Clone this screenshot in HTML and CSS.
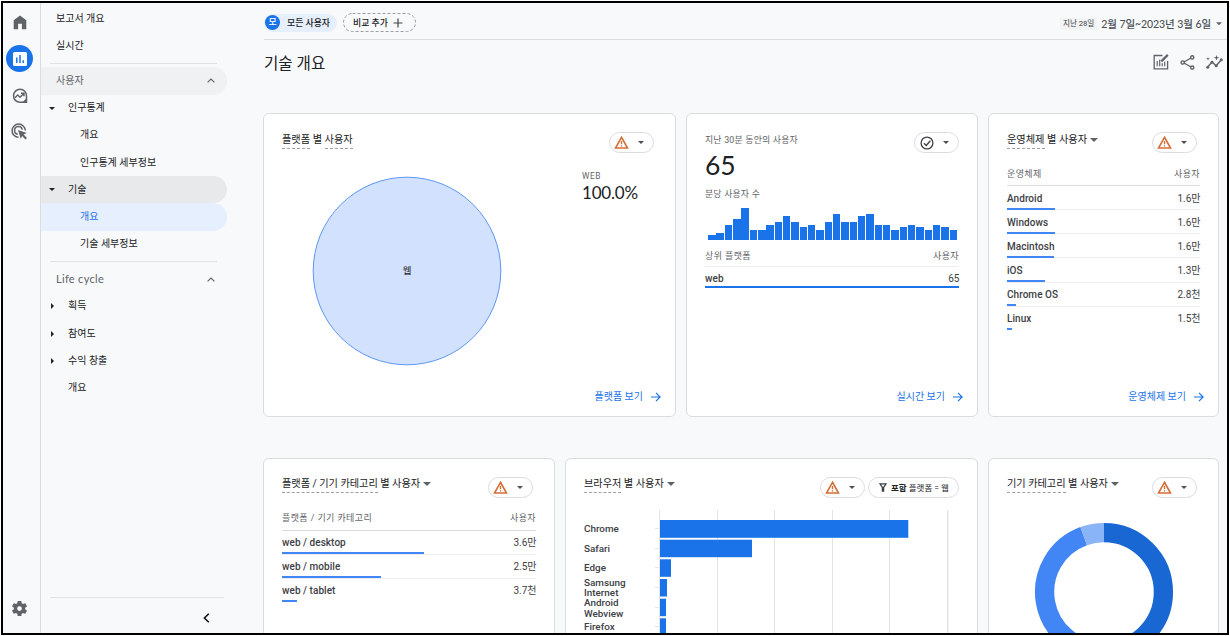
FILE: index.html
```html
<!DOCTYPE html>
<html lang="ko">
<head>
<meta charset="utf-8">
<title>기술 개요</title>
<link rel="stylesheet" href="styles.css">
</head>
<body>
<svg class="defs" width="0" height="0" aria-hidden="true">
  <symbol id="warn" viewBox="0 0 24 24"><path d="M12 3.600 21.600 20.800H2.400Z" fill="none" stroke="#d56e36" stroke-width="2.500"/><path d="M12 9.500v5.200M12 16.300v2.200" stroke="#d56e36" stroke-width="2.200"/></symbol>
  <symbol id="caret" viewBox="0 0 8 4"><path d="M0 0h8L4 4z" fill="currentColor"/></symbol>
  <symbol id="arrow" viewBox="0 0 10 10"><path d="M0 5h9M5 .9 9.100 5 5 9.100" fill="none" stroke="#1a73e8" stroke-width="1.200"/></symbol>
  <symbol id="up" viewBox="0 0 8 5"><path d="M.6 4.400 4 1l3.400 3.400" fill="none" stroke="#5f6368" stroke-width="1.100"/></symbol>
</svg>
<div class="frame">
  <aside class="rail">
    <div class="rail-item home"><svg width="14" height="15" viewBox="0 0 14 15"><path d="M.7 5.200 7 .5l6.300 4.700V14.200H8.900V8.800H5.100v5.400H.7Z" fill="#5f6368"/></svg></div>
    <div class="rail-item active"><svg width="14" height="14" viewBox="0 0 14 14"><rect width="14" height="14" rx="1.500" fill="#fff"/><path d="M3.800 5.500v5.500M7 3v8M10.200 8.200V11" stroke="#1a73e8" stroke-width="1.500"/></svg></div>
    <div class="rail-item explore"><svg width="16" height="16" viewBox="0 0 16 16"><path d="M14.500 8.300V14.300H8A6.500 6.500 0 1 1 14.500 8Z" fill="none" stroke="#5f6368" stroke-width="1.500"/><path d="m3 9.800 2.700-2.700 2.300 2.200 3.600-3.600M9 5.200h3v3" fill="none" stroke="#5f6368" stroke-width="1.400"/><path d="M14.800 10v4.600H10z" fill="#5f6368"/></svg></div>
    <div class="rail-item ads"><svg width="17" height="17" viewBox="0 0 17 17"><path d="M7.500 14.300A6.600 6.600 0 1 1 14.300 7.500M6.800 11.300A3.900 3.900 0 1 1 11.300 6.600" fill="none" stroke="#5f6368" stroke-width="1.500"/><path d="m7 7 8.800 3-3.200 1.600 3.400 3.400-1.500 1.500-3.400-3.400L9.800 16z" fill="#5f6368"/></svg></div>
    <div class="rail-item gear"><svg width="19" height="19" viewBox="0 0 24 24"><path d="M19.140 12.940c.04-.3.060-.61.060-.94s-.02-.64-.07-.94l2.030-1.580a.49.49 0 0 0 .12-.61l-1.920-3.320a.49.49 0 0 0-.59-.22l-2.390.96a7 7 0 0 0-1.620-.94l-.36-2.540A.48.48 0 0 0 13.920 2.400h-3.840a.48.48 0 0 0-.47.410l-.36 2.540c-.59.240-1.130.570-1.620.940l-2.390-.96a.48.48 0 0 0-.59.220L2.740 8.870a.47.47 0 0 0 .12.610l2.030 1.580c-.05.300-.09.630-.09.940s.02.640.07.940l-2.030 1.580a.49.49 0 0 0-.12.610l1.920 3.320c.12.220.37.290.59.220l2.390-.96c.5.380 1.030.700 1.620.940l.36 2.540c.05.240.24.410.48.410h3.840c.24 0 .44-.17.470-.41l.36-2.540c.59-.24 1.130-.56 1.620-.94l2.390.960c.22.080.47 0 .59-.22l1.920-3.320a.47.47 0 0 0-.12-.61zM12 15a3 3 0 1 1 0-6 3 3 0 0 1 0 6z" fill="#5f6368"/></svg></div>
  </aside>

  <nav class="nav">
    <div class="nav-row top">보고서 개요</div>
    <div class="nav-row top">실시간</div>
    <div class="rule"></div>
    <div class="nav-row head shade">사용자<svg class="chev" width="8" height="5"><use href="#up"/></svg></div>
    <div class="nav-row l1"><svg class="tri" width="6" height="3"><path d="M0 0h6L3 3z"/></svg>인구통계</div>
    <div class="nav-row l2">개요</div>
    <div class="nav-row l2">인구통계 세부정보</div>
    <div class="nav-row l1 open"><svg class="tri" width="6" height="3"><path d="M0 0h6L3 3z"/></svg>기술</div>
    <div class="nav-row l2 selected">개요</div>
    <div class="nav-row l2">기술 세부정보</div>
    <div class="rule second"></div>
    <div class="nav-row head"><span class="life">Life cycle</span><svg class="chev" width="8" height="5"><use href="#up"/></svg></div>
    <div class="nav-row l1"><svg class="tri" width="6" height="6"><path d="M2 0v6l3-3z"/></svg>획득</div>
    <div class="nav-row l1"><svg class="tri" width="6" height="6"><path d="M2 0v6l3-3z"/></svg>참여도</div>
    <div class="nav-row l1"><svg class="tri" width="6" height="6"><path d="M2 0v6l3-3z"/></svg>수익 창출</div>
    <div class="nav-row l1"><span class="tri"></span>개요</div>
    <div class="nav-foot"><svg width="7" height="10" viewBox="0 0 7 10"><path d="M5.800.7 1.400 5l4.400 4.300" fill="none" stroke="#111" stroke-width="1.600"/></svg></div>
  </nav>

  <main class="main">
    <header class="bar">
      <div class="chip all"><b>모</b>모든 사용자</div>
      <div class="chip add"><svg class="outline" width="73" height="19"><rect x=".5" y=".5" width="72" height="18" rx="9"/></svg>비교 추가<svg width="10" height="10"><path d="M5 .5v9M.5 5h9" stroke="#444" stroke-width="1.200"/></svg></div>
      <div class="date"><small>지난 28일</small><span>2월 7일~2023년 3월 6일</span><svg width="6" height="3.500"><use href="#caret"/></svg></div>
    </header>
    <div class="title">
      <h1>기술 개요</h1>
      <div class="tools">
        <svg width="16" height="16" viewBox="0 0 16 16" fill="none" stroke="#5f6368" stroke-width="1.300"><path d="M9.500 1.500H1.200v13.300h13.400V7"/><path d="M4.200 7v5.300M6.700 5.500v6.800M9.200 9.200v3.100M11.700 7.800v4.500" stroke-width="1.200"/><path d="m8.300 7.400 6.500-6.500" stroke-width="2.200"/></svg>
        <svg width="15" height="15" viewBox="0 0 15 15" fill="none" stroke="#5f6368" stroke-width="1.400"><path d="M3 7.500 12 2.500M3 7.500l9 5"/><circle cx="2.700" cy="7.500" r="1.600" fill="#f8f9fb"/><circle cx="12.200" cy="2.400" r="1.600" fill="#f8f9fb"/><circle cx="12.200" cy="12.600" r="1.600" fill="#f8f9fb"/></svg>
        <svg width="17" height="15" viewBox="0 0 17 15" fill="#5f6368"><path d="m1.500 12.300 4.500-5.300 4.100 3.700L15.600 4.500" fill="none" stroke="#5f6368" stroke-width="1.500"/><circle cx="1.700" cy="12.200" r="1.500"/><circle cx="6" cy="7.200" r="1.400"/><circle cx="10.200" cy="10.800" r="1.500"/><circle cx="15.300" cy="4.800" r="1.500"/><path d="m10.500 0 .7 2.100 2.100.7-2.100.7-.7 2.100-.7-2.100-2.100-.7 2.100-.7zM2 2l.5 1.300 1.300.5-1.300.5L2 5.600l-.5-1.300-1.300-.5 1.300-.5z"/></svg>
      </div>
    </div>

    <div class="cards row1">
      <section class="card">
        <div class="card-head"><h2><u>플랫폼</u> 별 <u>사용자</u></h2><div class="pill"><svg width="15" height="15"><use href="#warn"/></svg><svg class="pc" width="6" height="3"><use href="#caret"/></svg></div></div>
        <div class="pie-area">
          <svg class="pie" width="190" height="190"><circle cx="95" cy="95" r="93.800" fill="#d2e1fd" stroke="#5e97f6"/><text x="95" y="98" text-anchor="middle">웹</text></svg>
          <div class="pie-legend"><div class="cap">WEB</div><div class="pct">100.0%</div></div>
        </div>
        <div class="link">플랫폼 보기<svg width="10" height="10"><use href="#arrow"/></svg></div>
      </section>

      <section class="card live">
        <div class="card-head"><div class="sub">지난 30분 동안의 사용자</div><div class="pill"><svg width="14" height="14" viewBox="0 0 14 14" fill="none" stroke="#3c4043"><circle cx="7" cy="7" r="5.900" stroke-width="1.300"/><path d="m4 7.200 2.200 2.200 4.200-4.600" stroke-width="1.400"/></svg><svg class="pc" width="6" height="3"><use href="#caret"/></svg></div></div>
        <div class="big">65</div>
        <div class="sub per">분당 사용자 수</div>
        <div class="bars">
          <i style="height:5px"></i><i style="height:7.500px"></i><i style="height:15.500px"></i><i style="height:21px"></i><i style="height:32px"></i><i style="height:10.500px"></i><i style="height:10.500px"></i><i style="height:15.500px"></i><i style="height:18.500px"></i><i style="height:24px"></i><i style="height:18.500px"></i><i style="height:13px"></i><i style="height:15.500px"></i><i style="height:10.500px"></i><i style="height:18.500px"></i><i style="height:26.500px"></i><i style="height:18.500px"></i><i style="height:18.500px"></i><i style="height:24px"></i><i style="height:26.500px"></i><i style="height:15.500px"></i><i style="height:15.500px"></i><i style="height:10.500px"></i><i style="height:13px"></i><i style="height:15.500px"></i><i style="height:13px"></i><i style="height:10.500px"></i><i style="height:15.500px"></i><i style="height:13px"></i><i style="height:10.500px"></i>
        </div>
        <div class="tbl">
          <div class="th"><span>상위 플랫폼</span><span>사용자</span></div>
          <div class="tr"><b>web</b><span>65</span><i style="width:100%"></i></div>
        </div>
        <div class="link">실시간 보기<svg width="10" height="10"><use href="#arrow"/></svg></div>
      </section>

      <section class="card">
        <div class="card-head"><h2><u>운영체제</u> 별 사용자<svg class="hc" width="8" height="4"><use href="#caret"/></svg></h2><div class="pill"><svg width="15" height="15"><use href="#warn"/></svg><svg class="pc" width="6" height="3"><use href="#caret"/></svg></div></div>
        <div class="tbl">
          <div class="th"><span>운영체제</span><span>사용자</span></div>
          <div class="tr"><b>Android</b><span>1.6만</span><i style="width:48px"></i></div>
          <div class="tr"><b>Windows</b><span>1.6만</span><i style="width:47.500px"></i></div>
          <div class="tr"><b>Macintosh</b><span>1.6만</span><i style="width:47px"></i></div>
          <div class="tr"><b>iOS</b><span>1.3만</span><i style="width:37.500px"></i></div>
          <div class="tr"><b>Chrome OS</b><span>2.8천</span><i style="width:8.500px"></i></div>
          <div class="tr last"><b>Linux</b><span>1.5천</span><i style="width:5px"></i></div>
        </div>
        <div class="link">운영체제 보기<svg width="10" height="10"><use href="#arrow"/></svg></div>
      </section>
    </div>

    <div class="cards row2">
      <section class="card">
        <div class="card-head"><h2><u>플랫폼 / 기기 카테고리</u> 별 사용자<svg class="hc" width="8" height="4"><use href="#caret"/></svg></h2><div class="pill"><svg width="15" height="15"><use href="#warn"/></svg><svg class="pc" width="6" height="3"><use href="#caret"/></svg></div></div>
        <div class="tbl">
          <div class="th"><span>플랫폼 / 기기 카테고리</span><span>사용자</span></div>
          <div class="tr"><b>web / desktop</b><span>3.6만</span><i style="width:142px"></i></div>
          <div class="tr"><b>web / mobile</b><span>2.5만</span><i style="width:98.500px"></i></div>
          <div class="tr last"><b>web / tablet</b><span>3.7천</span><i style="width:15px"></i></div>
        </div>
      </section>

      <section class="card browser">
        <div class="card-head"><h2><u>브라우저</u> 별 사용자<svg class="hc" width="8" height="4"><use href="#caret"/></svg></h2><div class="pills"><div class="pill"><svg width="15" height="15"><use href="#warn"/></svg><svg class="pc" width="6" height="3"><use href="#caret"/></svg></div><div class="pill filter"><svg width="8" height="9" viewBox="0 0 8 9"><path d="M1 .8h6L4.600 4.400v3.600H3.400V4.400z" fill="none" stroke="#3c4043" stroke-width="1.300"/></svg><span><b>포함</b> 플랫폼 = 웹</span></div></div></div>
        <svg class="chart" width="374" height="130">
          <g fill="#e3e4e6"><rect x="75" y="0" width="1" height="130"/><rect x="133" y="0" width="1" height="130"/><rect x="190" y="0" width="1" height="130"/><rect x="248" y="0" width="1" height="130"/><rect x="305" y="0" width="1" height="130"/><rect x="363" y="0" width="1.500" height="130"/>
          <path d="M71 18h5v1h-5zM71 38h5v1h-5zM71 57h5v1h-5zM71 77h5v1h-5zM71 97h5v1h-5zM71 116h5v1h-5z"/></g>
          <g fill="#1a73e8"><rect x="76" y="10" width="248.300" height="17.800"/><rect x="76" y="29.700" width="92" height="17.500"/><rect x="76" y="49.300" width="11" height="17.500"/><rect x="76" y="69" width="7" height="17.500"/><rect x="76" y="88.700" width="6" height="17.500"/><rect x="76" y="108.300" width="6" height="17.500"/></g>
          <g class="lab"><text x="0" y="22">Chrome</text><text x="0" y="41.500">Safari</text><text x="0" y="61">Edge</text><text x="0" y="75.500">Samsung</text><text x="0" y="86.300">Internet</text><text x="0" y="95.500">Android</text><text x="0" y="106.500">Webview</text><text x="0" y="120.300">Firefox</text></g>
        </svg>
      </section>

      <section class="card">
        <div class="card-head"><h2><u>기기 카테고리</u> 별 사용자<svg class="hc" width="8" height="4"><use href="#caret"/></svg></h2><div class="pill"><svg width="15" height="15"><use href="#warn"/></svg><svg class="pc" width="6" height="3"><use href="#caret"/></svg></div></div>
        <svg class="donut" width="140" height="140" viewBox="-70 -70 140 140" fill="none" stroke-width="19.300"><path d="M0-59.400A59.400 59.400 0 0 1 0 59.400" stroke="#1967d2"/><path d="M0 59.400A59.400 59.400 0 0 1-20.300-55.820" stroke="#4285f4"/><path d="M-20.300-55.820A59.400 59.400 0 0 1 0-59.400" stroke="#8ab4f8"/></svg>
      </section>
    </div>
  </main>
</div>
</body>
</html>
```
FILE: styles.css
```css
* { box-sizing: border-box; }
body { margin: 0; width: 1230px; height: 636px; overflow: hidden; background: #fff; color: #202124; font: 10px/14px Roboto, "Noto Sans CJK KR", sans-serif; }
svg { display: block; flex: none; }
.defs { position: absolute; }
.frame { margin: 1px; width: 1228px; height: 634px; border: 2px solid #000; background: #f8f9fb; display: flex; overflow: hidden; }

.rail { width: 38px; flex: none; border-right: 1px solid #dadce0; display: flex; flex-direction: column; align-items: center; padding: 6px 4px 11px 0; }
.rail-item { width: 27px; height: 27px; display: flex; align-items: center; justify-content: center; flex: none; }
.rail-item.active { margin-top: 9px; background: #1a73e8; border-radius: 50%; }
.rail-item.explore { margin-top: 10px; }
.rail-item.ads { margin-top: 9px; }
.rail-item.gear { margin-top: auto; }

.nav { width: 222px; flex: none; display: flex; flex-direction: column; padding-top: 1.500px; }
.nav-row { width: 185.500px; height: 27.200px; flex: none; display: flex; align-items: center; border-radius: 0 14px 14px 0; color: #202124; }
.top { padding: 1px 0 0 15px; }
.head { padding: 0 11.500px 0 15px; justify-content: space-between; color: #5f6368; }
.shade { background: #f0f1f2; }
.life { font: 11px/14px Lato, sans-serif; letter-spacing: .3px; }
.l1 { padding-left: 8px; }
.tri { width: 6px; margin-right: 13px; fill: #202124; }
.l2 { padding-left: 39px; }
.open { background: #e8e9ea; }
.selected { background: #e6effd; color: #1a73e8; }
.rule { height: 1px; flex: none; background: #dfe1e4; width: 167px; margin: 4px 0 3.500px 9px; }
.rule.second { margin-top: 3px; margin-bottom: 4px; }
.nav-foot { margin: auto 0 0 9px; width: 174px; height: 36px; border-top: 1px solid #dfe1e4; display: flex; justify-content: flex-end; align-items: center; padding: 5px 14px 0 0; }

.main { flex: 1; min-width: 0; }
.bar { height: 37px; margin-left: 1px; border-bottom: 1px solid #dadce0; display: flex; align-items: center; padding: 2px 5px 0 0; }
.chip { height: 18px; display: flex; align-items: center; font-size: 8.900px; font-weight: 500; white-space: nowrap; }
.all { width: 73px; background: #e6effd; border-radius: 9px; gap: 7px; padding-left: 1px; margin-top: 1px; }
.all b { width: 15px; height: 15px; border-radius: 50%; background: #1a73e8; color: #fff; font-weight: 500; line-height: 15px; text-align: center; flex: none; }
.add { position: relative; width: 73px; margin-left: 6px; padding-left: 10px; gap: 5px; height: 19px; margin-top: 1px; }
.outline { position: absolute; left: 0; top: 0; fill: none; stroke: #9aa0a6; stroke-dasharray: 3 2; }
.date { margin-left: auto; display: flex; align-items: center; color: #5f6368; white-space: nowrap; padding-top: 4px; }
.date small { background: #f1f3f4; font-size: 7.600px; line-height: 12px; padding: 0 3px; margin-right: 4px; color: #3c4043; }
.date span { font: 500 10.500px/14px Lato, "Noto Sans CJK KR", sans-serif; letter-spacing: -.08px; margin-right: 5px; color: #4b4f54; }
.title { height: 73px; display: flex; justify-content: space-between; padding: 12px 4px 0 1px; }
h1 { margin: 0; font-size: 15.600px; line-height: 25px; font-weight: 400; }
.tools { display: flex; align-items: center; gap: 11px; height: 20px; }

.cards { display: grid; gap: 10px; }
.row1 { grid-template-columns: 413px 292px 231px; height: 304px; }
.row2 { grid-template-columns: 292px 413px 231px; margin-top: 41px; height: 304px; }
.card { background: #fff; border: 1px solid #dadce0; border-radius: 6px; padding: 18px; display: flex; flex-direction: column; min-width: 0; }
.card-head { display: flex; justify-content: space-between; align-items: flex-start; height: 30px; flex: none; }
h2 { margin: -1px 0 0; font-size: 10.200px; line-height: 14px; font-weight: 400; display: flex; align-items: center; white-space: pre; color: #202124; }
.row2 h2 { margin-top: -2px; letter-spacing: -.03px; }
u { text-decoration: none; border-bottom: 1px dashed #9aa0a6; line-height: 16px; margin-top: 1px; }
.hc { margin-left: 3px; color: #5f6368; }
.pill { width: 45px; height: 21px; border: 1px solid #dadce0; border-radius: 11px; display: flex; align-items: center; padding-left: 4px; background: #fff; margin-right: 3px; color: #4b4f54; }
.pc { margin-left: 9px; }
.pills { display: flex; gap: 3px; }
.pills .pill { margin-right: 0; }
.pills .filter { width: 91px; padding-left: 10px; gap: 4px; font-size: 8.500px; white-space: nowrap; color: #202124; }

.pie-area { display: flex; justify-content: space-between; padding-left: 30px; height: 204px; }
.pie { margin-top: 14px; }
.pie text { font-size: 9.500px; fill: #202124; }
.pie-legend { width: 75px; padding-top: 7px; }
.cap { font-size: 8.300px; letter-spacing: .6px; color: #5f6368; line-height: 14px; }
.pct { font: 17px/20px Lato, sans-serif; letter-spacing: -.2px; }
.link { margin: auto -4px -7px 0; display: flex; justify-content: flex-end; align-items: center; gap: 8px; color: #1a73e8; height: 16px; }

.sub { font-size: 8.900px; letter-spacing: .2px; color: #5f6368; line-height: 16px; }
.live .card-head { height: 22px; }
.live .pill { margin-right: 0; padding-left: 5px; }
.big { font: 26.500px/22px Lato, sans-serif; }
.per { margin-top: 11px; line-height: 14px; }
.bars { display: flex; align-items: flex-end; height: 39px; width: 250px; margin: 0 0 0 3px; flex: none; }
.bars i { flex: 1; background: #1a73e8; margin-right: .8px; }
.tbl { display: flex; flex-direction: column; }
.th { height: 24px; display: flex; justify-content: space-between; align-items: center; border-bottom: 1px solid #dadce0; font-size: 9px; letter-spacing: .4px; color: #5f6368; }
.row2 .th { height: 23.500px; }
.tr { height: 24.150px; display: flex; justify-content: space-between; align-items: center; padding-top: 2px; border-bottom: 1px solid #eceef0; color: #3c4043; position: relative; }
.row2 .tr { padding-top: 1px; }
.tr.last { border-color: transparent; }
.tr b { font-weight: 500; letter-spacing: .05px; color: #3c4043; }
.tr > span { margin-right: -.5px; }
.tr i { position: absolute; left: 0; bottom: -.5px; height: 2px; background: #4285f4; }
.live .th { height: 27px; padding-top: 5px; border-color: #eceef0; }
.live .tr { height: 22px; border-color: transparent; }
.live .tr i { background: #1a73e8; bottom: 0; }

.chart { margin-top: 3px; font-size: 9.900px; overflow: hidden; flex: none; }
.lab { fill: #3c4043; font-weight: 500; }
.donut { margin: 15px 0 0 27px; }
```
